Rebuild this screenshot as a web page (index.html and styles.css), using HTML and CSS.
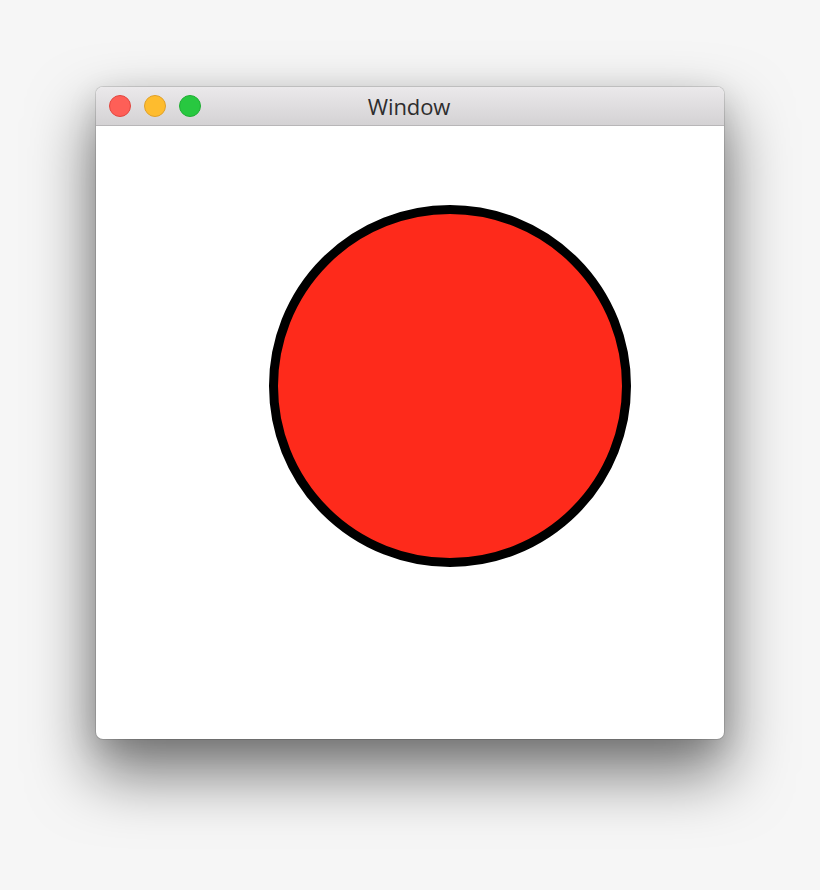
FILE: index.html
```html
<!DOCTYPE html>
<html>
<head>
<meta charset="utf-8">
<link rel="stylesheet" href="styles.css">
</head>
<body>
<div class="window">
  <div class="titlebar">
    <div class="lights">
      <span class="light close"></span>
      <span class="light min"></span>
      <span class="light max"></span>
    </div>
    <div class="title">Window</div>
  </div>
  <div class="content">
    <div class="circle"></div>
  </div>
</div>
</body>
</html>
```
FILE: styles.css
```css
html, body {
  margin: 0;
  padding: 0;
  background: #f6f6f6;
  width: 820px;
  height: 890px;
  overflow: hidden;
}
body {
  padding: 87px 0 0 96px;
  box-sizing: border-box;
  font-family: "Open Sans", "Liberation Sans", sans-serif;
}
.window {
  width: 628px;
  height: 652px;
  border-radius: 7px;
  background: #fff;
  overflow: hidden;
  box-shadow: 0 0 0 1px rgba(0,0,0,0.12), 0 32px 62px 4px rgba(0,0,0,0.5), 0 8px 30px rgba(0,0,0,0.12);
  display: flex;
  flex-direction: column;
}
.titlebar {
  position: relative;
  height: 38px;
  flex: none;
  background: linear-gradient(#ebe9eb, #d4d2d4);
  border-bottom: 1px solid #b8b6b8;
  display: flex;
  align-items: center;
  justify-content: center;
}
.lights {
  position: absolute;
  left: 13px;
  top: 8px;
  display: flex;
  gap: 13px;
}
.light {
  width: 20px;
  height: 20px;
  border-radius: 50%;
  border: 1px solid;
  display: block;
}
.close { background: #fe5f57; border-color: #e2463f; }
.min { background: #febc2e; border-color: #e0a028; }
.max { background: #28c840; border-color: #1fae33; }
.title {
  font-size: 22px;
  color: #2e2d2e;
  margin-left: -2px;
  margin-top: -1px;
  letter-spacing: -0.1px;
}
.content {
  flex: 1;
  padding: 79px 0 0 173px;
}
.circle {
  width: 344px;
  height: 344px;
  border: 9px solid #000;
  border-radius: 50%;
  background: #fe2a1b;
}
```
